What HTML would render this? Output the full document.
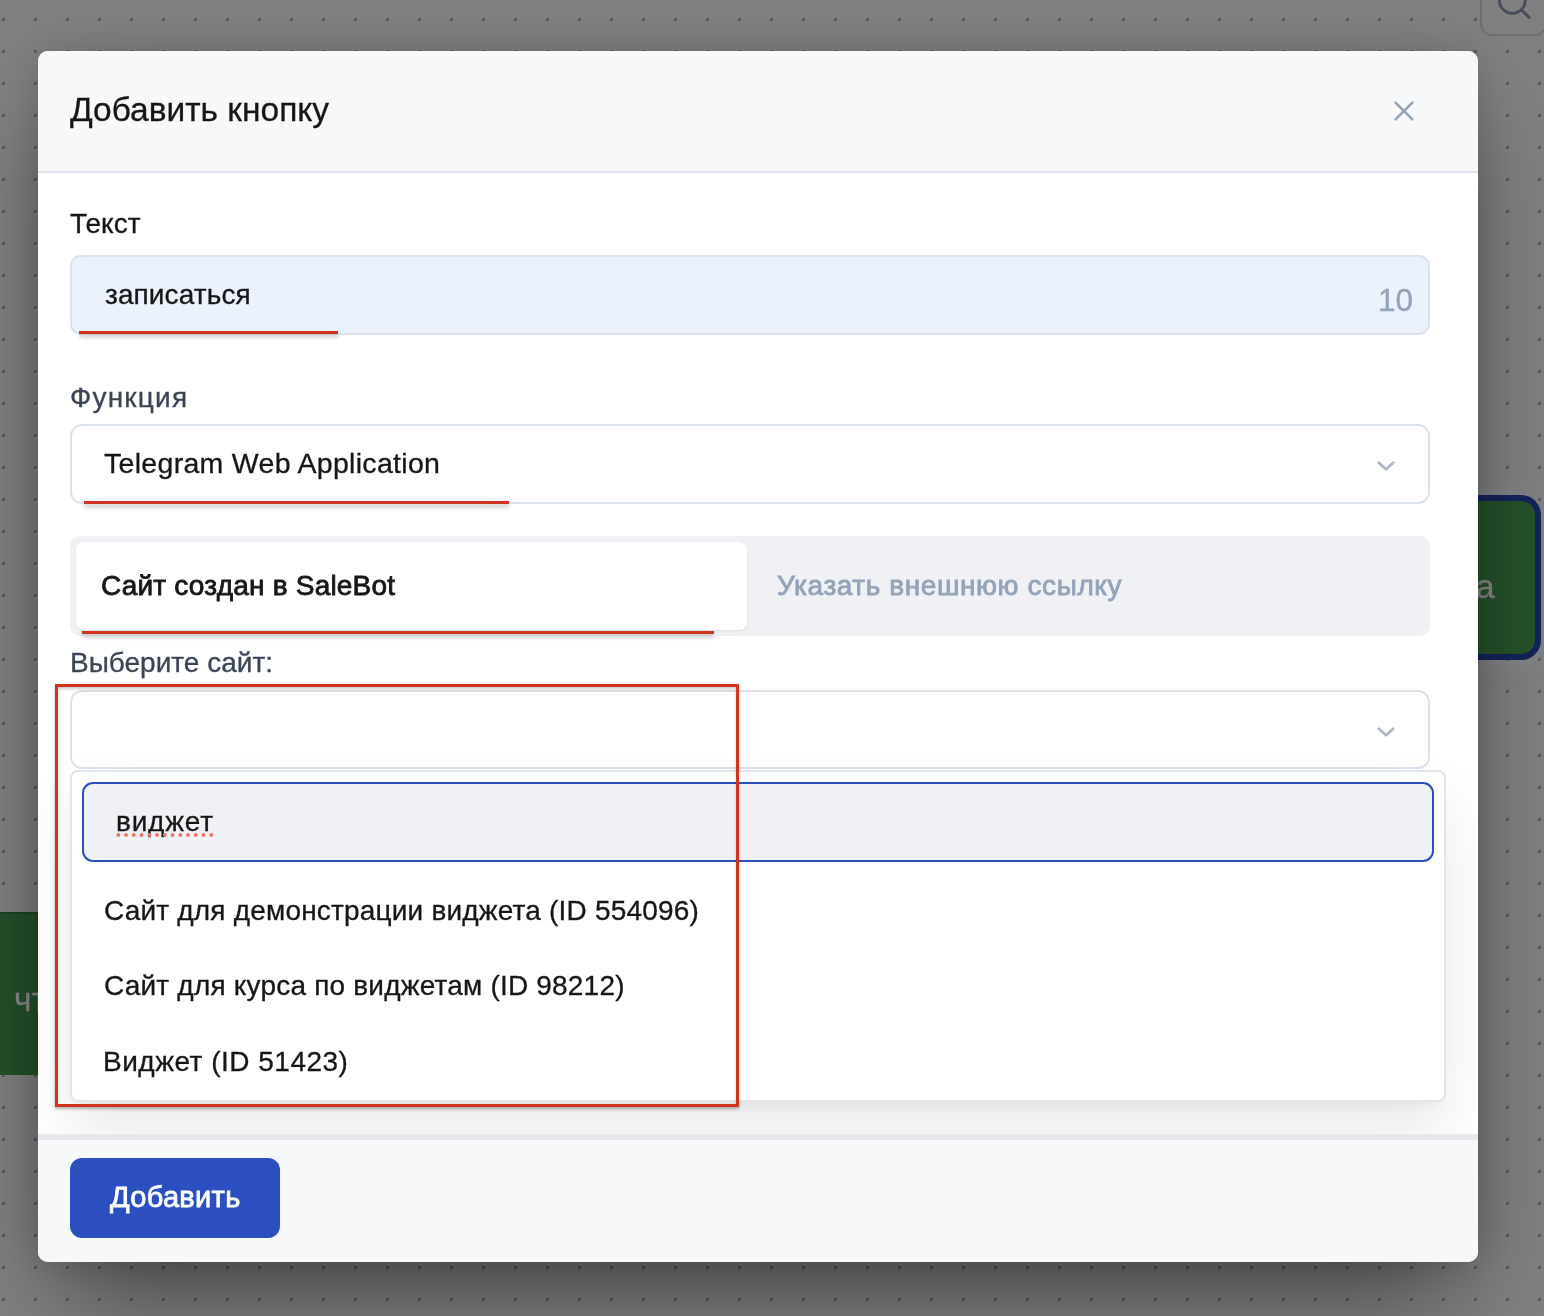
<!DOCTYPE html>
<html><head><meta charset="utf-8">
<style>
html,body{margin:0;padding:0;}
body{width:1544px;height:1316px;position:relative;overflow:hidden;background:#808080;font-family:"Liberation Sans",sans-serif;}
.abs{position:absolute;}
.t{position:absolute;white-space:nowrap;line-height:1;will-change:transform;-webkit-text-stroke:0.3px currentColor;}
.sb{font-weight:400;-webkit-text-stroke:0.8px currentColor;}
#modal{position:absolute;left:38px;top:51px;width:1440px;height:1211px;background:#fff;border-radius:10px;overflow:hidden;box-shadow:0 50px 100px -24px rgba(0,0,0,0.5), 0 0 40px rgba(0,0,0,0.15);}
#hdr{position:absolute;left:0;top:0;width:1440px;height:120px;background:#f7f8fa;border-bottom:2px solid #dfe3ed;}
#ftr{position:absolute;left:38px;top:1134px;width:1440px;height:128px;border-radius:0 0 10px 10px;background:#f7f8fa;border-top:6px solid #e7e8ee;box-sizing:border-box;}
.red{position:absolute;background:#d0341f;box-shadow:0 3px 4px rgba(0,0,0,0.28);}
</style></head>
<body>
<svg class="abs" style="left:0;top:0" width="1544" height="1316">
<defs><pattern id="dots" x="2" y="18" width="32" height="32" patternUnits="userSpaceOnUse"><rect x="0" y="0" width="3" height="3" fill="#5c5c5c"/></pattern></defs>
<rect width="1544" height="1316" fill="url(#dots)"/>
</svg>
<!-- top right search button -->
<div class="abs" style="left:1480px;top:-30px;width:67px;height:66px;background:#808080;border:2px solid #6c6f75;border-radius:12px;box-sizing:border-box;"></div>
<svg class="abs" style="left:1480px;top:0" width="64" height="40"><circle cx="32.3" cy="0.3" r="13" fill="none" stroke="#464c58" stroke-width="2.9"/><line x1="41.5" y1="10" x2="49.2" y2="17.4" stroke="#464c58" stroke-width="2.9" stroke-linecap="round"/></svg>
<!-- right green button -->
<div class="abs" style="left:1380px;top:495px;width:161px;height:165px;background:#26522b;border:6px solid #14235a;border-radius:20px;box-sizing:border-box;box-shadow:0 0 22px 2px rgba(150,160,200,0.2);"></div>
<div class="t" style="left:1457px;top:568.5px;font-size:34px;color:#8a8a8a;">на</div>
<!-- left green element -->
<div class="abs" style="left:-20px;top:912px;width:80px;height:163px;background:#25512a;border-top:2px solid #1f4423;box-sizing:border-box;"></div>
<div class="t" style="left:13.5px;top:982.5px;font-size:33.5px;color:#8a8a8a;">чт</div>

<div id="modal">
  <div id="hdr"></div>
</div>

<!-- header -->
<div class="t" style="left:70px;top:92.5px;font-size:33.5px;color:#161616;">Добавить кнопку</div>
<svg class="abs" style="left:1384px;top:91px" width="40" height="40"><path d="M11.5 11.6 L28.4 28.4 M28.4 11.6 L11.5 28.4" stroke="#94a3b8" stroke-width="2.7" stroke-linecap="round" fill="none"/></svg>

<!-- Text field -->
<div class="t" style="left:70px;top:210px;font-size:28px;color:#161616;">Текст</div>
<div class="abs" style="left:70px;top:255px;width:1360px;height:80px;background:#ebf2fc;border:2px solid #dce3ee;border-radius:11px;box-sizing:border-box;"></div>
<div class="t" style="left:104.5px;top:280.5px;font-size:28px;letter-spacing:0.1px;color:#161616;">записаться</div>
<div class="t" style="left:1378px;top:284.5px;font-size:31.5px;color:#94a3b8;">10</div>
<div class="red" style="left:79px;top:331px;width:259px;height:3px;"></div>

<!-- Function select -->
<div class="t" style="left:70px;top:383.5px;font-size:28px;letter-spacing:1.2px;color:#394455;">Функция</div>
<div class="abs" style="left:70px;top:424px;width:1360px;height:80px;background:#fff;border:2px solid #dce2ec;border-radius:12px;box-sizing:border-box;"></div>
<div class="t" style="left:104px;top:449px;font-size:28.5px;letter-spacing:0.3px;color:#161616;">Telegram Web Application</div>
<svg class="abs" style="left:1376px;top:456px" width="20" height="20"><path d="M2.9 6.7 L10 13.3 L17.2 6.7" stroke="#abb7c8" stroke-width="2.8" stroke-linecap="round" stroke-linejoin="round" fill="none"/></svg>
<div class="red" style="left:84px;top:501px;width:425px;height:3px;"></div>

<!-- tabs -->
<div class="abs" style="left:70px;top:536px;width:1360px;height:100px;background:#eff1f5;border-radius:10px;"></div>
<div class="abs" style="left:76px;top:542px;width:671px;height:88px;background:#fff;border-radius:8px;box-shadow:0 1px 3px rgba(0,0,0,0.08);"></div>
<div style="left:101px;top:571.5px;font-size:28px;letter-spacing:0.2px;color:#161616;" class="t sb">Сайт создан в SaleBot</div>
<div style="left:777px;top:571.5px;font-size:28px;letter-spacing:0.58px;color:#94a3b8;" class="t sb">Указать внешнюю ссылку</div>
<div class="red" style="left:82px;top:631px;width:632px;height:3px;"></div>

<!-- select site -->
<div class="t" style="left:70px;top:649px;font-size:28px;color:#394455;">Выберите сайт:</div>
<div class="abs" style="left:70px;top:690px;width:1360px;height:79px;background:#fff;border:2px solid #dce2ec;border-radius:12px;box-sizing:border-box;"></div>
<svg class="abs" style="left:1376px;top:722px" width="20" height="20"><path d="M2.9 6.7 L10 13.3 L17.2 6.7" stroke="#abb7c8" stroke-width="2.8" stroke-linecap="round" stroke-linejoin="round" fill="none"/></svg>

<!-- dropdown -->
<div class="abs" style="left:70px;top:770px;width:1376px;height:332px;background:#fff;border:2px solid #e0e5ee;border-radius:8px;box-sizing:border-box;box-shadow:0 30px 60px rgba(0,0,0,0.09), 0 8px 12px -8px rgba(0,0,0,0.08);"></div>
<div class="abs" style="left:82px;top:782px;width:1352px;height:80px;background:#f0f1f5;border:2px solid #2c4fc0;border-radius:11px;box-sizing:border-box;"></div>
<div class="t" style="left:116px;top:807.8px;font-size:28px;letter-spacing:0.8px;color:#161616;">виджет</div>
<svg class="abs" style="left:114px;top:831px" width="104" height="8"><circle cx="4.30" cy="4" r="1.9" fill="#ef7565"/><circle cx="12.05" cy="4" r="1.9" fill="#ef7565"/><circle cx="19.80" cy="4" r="1.9" fill="#ef7565"/><circle cx="27.55" cy="4" r="1.9" fill="#ef7565"/><circle cx="35.30" cy="4" r="1.9" fill="#ef7565"/><circle cx="43.05" cy="4" r="1.9" fill="#ef7565"/><circle cx="50.80" cy="4" r="1.9" fill="#ef7565"/><circle cx="58.55" cy="4" r="1.9" fill="#ef7565"/><circle cx="66.30" cy="4" r="1.9" fill="#ef7565"/><circle cx="74.05" cy="4" r="1.9" fill="#ef7565"/><circle cx="81.80" cy="4" r="1.9" fill="#ef7565"/><circle cx="89.55" cy="4" r="1.9" fill="#ef7565"/><circle cx="97.30" cy="4" r="1.9" fill="#ef7565"/></svg>
<div class="t" style="left:104px;top:896.5px;font-size:28px;letter-spacing:0.19px;color:#161616;">Сайт для демонстрации виджета (ID 554096)</div>
<div class="t" style="left:104px;top:972.3px;font-size:28px;letter-spacing:0.2px;color:#161616;">Сайт для курса по виджетам (ID 98212)</div>
<div class="t" style="left:103px;top:1047.8px;font-size:28px;letter-spacing:0.5px;color:#161616;">Виджет (ID 51423)</div>

<div id="ftr"></div>
<!-- red box -->
<div class="abs" style="left:55px;top:684px;width:684px;height:423px;border:3px solid #d0341f;box-sizing:border-box;box-shadow:0 2px 3px rgba(0,0,0,0.28), inset 0 2px 3px rgba(0,0,0,0.2);"></div>

<!-- footer button -->
<div class="abs" style="left:70px;top:1158px;width:210px;height:80px;background:#2b4fbf;border-radius:12px;"></div>
<div style="left:109.5px;top:1182.8px;font-size:29px;letter-spacing:0.3px;color:#fff;" class="t sb">Добавить</div>
</body></html>
